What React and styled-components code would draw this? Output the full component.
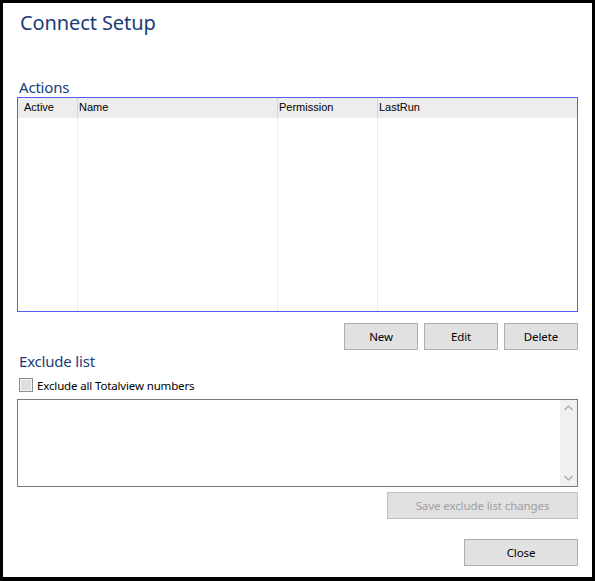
import React from "react";
import styled, { createGlobalStyle } from "styled-components";

const Global = createGlobalStyle`
  html, body { margin: 0; padding: 0; background: #000; }
  body { font-family: "Noto Sans", "Open Sans", sans-serif; }
  * { box-sizing: border-box; }
`;

const Window = styled.div`
  width: 595px;
  height: 581px;
  border: 3px solid #000;
  border-bottom-width: 4px;
  background: #fff;
  padding: 0 14px;
  display: flex;
  flex-direction: column;
`;

const Title = styled.div`
  height: 40px;
  line-height: 40px;
  padding-left: 3px;
  font-size: 20px;
  font-weight: 400;
  letter-spacing: -0.1px;
  color: #1a3c78;
`;

const SectionLabel = styled.div`
  height: 20px;
  line-height: 20px;
  padding-left: 2px;
  font-size: 15px;
  letter-spacing: -0.2px;
  color: #1a3c78;
  margin-top: ${(p) => p.$top}px;
`;

const TableFrame = styled.div`
  height: 215px;
  padding: 1px;
  background: #5a5af0;
  display: flex;
`;

const Table = styled.div`
  flex: 1;
  background: #fff;
  display: grid;
  grid-template-columns: 60px 200px 100px 1fr;
  grid-template-rows: 20px 1fr;
`;

const HeadCell = styled.div`
  background: #ededed;
  border-right: 1px solid ${(p) => (p.$last ? "transparent" : "#d6d6d6")};
  font-family: "Liberation Sans", Arial, sans-serif;
  font-size: 11px;
  line-height: 19px;
  color: #000;
  padding-left: ${(p) => p.$pad}px;
`;

const BodyCell = styled.div`
  border-right: 1px solid ${(p) => (p.$last ? "transparent" : "#ededed")};
`;

const ButtonRow = styled.div`
  display: flex;
  justify-content: flex-end;
  gap: 6px;
  margin-top: ${(p) => p.$top}px;
`;

const Button = styled.button`
  width: ${(p) => p.$w}px;
  height: 27px;
  background: #e1e1e1;
  border: 1px solid ${(p) => (p.disabled ? "#bfbfbf" : "#adadad")};
  color: ${(p) => (p.disabled ? "#a0a0a0" : "#000")};
  font-family: "Noto Sans", "Open Sans", sans-serif;
  font-size: 11.5px;
  letter-spacing: -0.1px;
  padding: 0;
  margin: 0;
`;

const CheckRow = styled.label`
  display: flex;
  align-items: center;
  gap: 4px;
  height: 16px;
  margin-top: 6px;
  padding-left: 2px;
  font-size: 11.5px;
  letter-spacing: -0.15px;
  color: #000;
`;

const CheckBox = styled.span`
  width: 14px;
  height: 14px;
  border: 1px solid #8e8e8e;
  background: #dedede;
  box-shadow: inset 0 0 0 1px #f4f4f4;
`;

const TextArea = styled.div`
  height: 88px;
  margin-top: 6px;
  border: 1px solid #7a7a7a;
  display: flex;
  justify-content: flex-end;
`;

const ScrollBar = styled.div`
  width: 17px;
  background: #f0f0f0;
  display: flex;
  flex-direction: column;
  justify-content: space-between;
  align-items: center;
  padding: 5px 0;
`;

const Chevron = ({ up }) => (
  <svg width="9" height="6" viewBox="0 0 9 6">
    <path
      d={up ? "M0.5 5 L4.5 1 L8.5 5" : "M0.5 1 L4.5 5 L8.5 1"}
      fill="none"
      stroke="#a6a6a6"
      strokeWidth="1.2"
    />
  </svg>
);

const cols = [
  { name: "Active", pad: 6 },
  { name: "Name", pad: 1 },
  { name: "Permission", pad: 1 },
  { name: "LastRun", pad: 1 },
];

export default function App() {
  return (
    <>
      <Global />
      <Window>
        <Title>Connect Setup</Title>
        <SectionLabel $top={34}>Actions</SectionLabel>
        <TableFrame>
          <Table>
            {cols.map((c, i) => (
              <HeadCell key={c.name} $pad={c.pad} $last={i === cols.length - 1}>
                {c.name}
              </HeadCell>
            ))}
            {cols.map((c, i) => (
              <BodyCell key={c.name + "b"} $last={i === cols.length - 1} />
            ))}
          </Table>
        </TableFrame>
        <ButtonRow $top={11}>
          <Button $w={74}>New</Button>
          <Button $w={74}>Edit</Button>
          <Button $w={74}>Delete</Button>
        </ButtonRow>
        <SectionLabel $top={1}>Exclude list</SectionLabel>
        <CheckRow>
          <CheckBox />
          Exclude all Totalview numbers
        </CheckRow>
        <TextArea>
          <ScrollBar>
            <Chevron up />
            <Chevron />
          </ScrollBar>
        </TextArea>
        <ButtonRow $top={5}>
          <Button $w={191} disabled>
            Save exclude list changes
          </Button>
        </ButtonRow>
        <ButtonRow $top={20}>
          <Button $w={114}>Close</Button>
        </ButtonRow>
      </Window>
    </>
  );
}
